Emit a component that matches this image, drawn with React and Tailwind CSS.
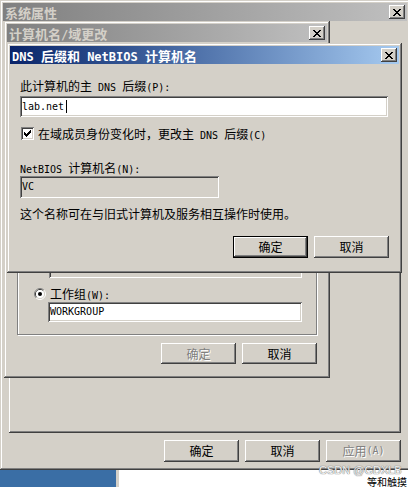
import React from 'react'

const CJK = /[\u2e80-\u9fff\uff00-\uffef]/
const RUNS = /[\u2e80-\u9fff\uff00-\uffef]+|[^\u2e80-\u9fff\uff00-\uffef]+/g

// SimSun-like text: CJK at 12px, latin in a narrow mono face
function Txt({ s, bold }) {
  const parts = s.match(RUNS) || []
  return parts.map((p, i) =>
    CJK.test(p) ? (
      <span key={i} className={bold ? 'text-[13px] font-bold' : 'text-[12px]'}>{p}</span>
    ) : (
      <span
        key={i}
        className={
          bold
            ? "[font-family:'DejaVu_Sans_Mono',monospace] text-[12px] font-bold"
            : "[font-family:'DejaVu_Sans_Mono',monospace] text-[10px]"
        }
      >
        {p}
      </span>
    )
  )
}

const X_GLYPH = ['XX....XX', '.XX..XX.', '..XXXX..', '...XX...', '..XXXX..', '.XX..XX.', 'XX....XX']
const CHECK = ['......X', '.....XX', 'X...XXX', 'XX.XXX.', 'XXXXX..', '.XXX...', '..X....']

function Pixels({ rows }) {
  return (
    <svg width={rows[0].length} height={rows.length} shapeRendering="crispEdges">
      {rows.map((r, y) =>
        r.split('').map((c, x) => (c === 'X' ? <rect key={`${x}-${y}`} x={x} y={y} width="1" height="1" fill="#000" /> : null))
      )}
    </svg>
  )
}

function CloseBtn() {
  return (
    <div className="w-[16px] h-[14px] shrink-0 bg-[#d4d0c8] flex items-center justify-center shadow-[inset_-1px_-1px_0_#404040,inset_1px_1px_0_#ffffff,inset_-2px_-2px_0_#808080,inset_2px_2px_0_#d4d0c8]">
      <Pixels rows={X_GLYPH} />
    </div>
  )
}

function TitleBar({ title, active }) {
  return (
    <div
      className={`h-[18px] shrink-0 flex items-center justify-between pl-[2px] pr-[2px] whitespace-pre leading-[18px] ${
        active
          ? 'bg-linear-to-r from-[#0a246a] to-[#a6caf0] text-white'
          : 'bg-linear-to-r from-[#808080] to-[#c0c0c0] text-[#d4d0c8]'
      }`}
    >
      <div>
        <Txt s={title} bold />
      </div>
      <CloseBtn />
    </div>
  )
}

function Btn({ children, disabled, def, w = 'w-[75px]', h = 'h-[22px]' }) {
  return (
    <div
      className={`${w} ${h} flex items-center justify-center whitespace-pre leading-[14px] bg-[#d4d0c8] ${
        def
          ? 'border border-black shadow-[inset_-1px_-1px_0_#404040,inset_1px_1px_0_#ffffff,inset_-2px_-2px_0_#808080]'
          : 'shadow-[inset_-1px_-1px_0_#404040,inset_1px_1px_0_#ffffff,inset_-2px_-2px_0_#808080,inset_2px_2px_0_#d4d0c8]'
      } ${disabled ? 'text-[#808080] [text-shadow:1px_1px_0_#ffffff]' : 'text-black'}`}
    >
      <Txt s={children} />
    </div>
  )
}

const SUNKEN = 'shadow-[inset_1px_1px_0_#808080,inset_-1px_-1px_0_#ffffff,inset_2px_2px_0_#404040,inset_-2px_-2px_0_#d4d0c8]'
const WINDOW = 'bg-[#d4d0c8] p-[3px] shadow-[inset_-1px_-1px_0_#404040,inset_1px_1px_0_#d4d0c8,inset_-2px_-2px_0_#808080,inset_2px_2px_0_#ffffff]'

function Radio() {
  return (
    <svg width="12" height="12" viewBox="0 0 12 12">
      <path d="M2.11 9.89 A5.5 5.5 0 0 1 9.89 2.11" fill="none" stroke="#808080" />
      <path d="M9.89 2.11 A5.5 5.5 0 0 1 2.11 9.89" fill="none" stroke="#ffffff" />
      <path d="M2.82 9.18 A4.5 4.5 0 0 1 9.18 2.82" fill="none" stroke="#404040" />
      <path d="M9.18 2.82 A4.5 4.5 0 0 1 2.82 9.18" fill="none" stroke="#d4d0c8" />
      <circle cx="6" cy="6" r="4" fill="#ffffff" />
      <circle cx="6" cy="6" r="2" fill="#000000" />
    </svg>
  )
}

function Checkbox() {
  return (
    <div className={`w-[13px] h-[13px] bg-white flex items-center justify-center ${SUNKEN}`}>
      <Pixels rows={CHECK} />
    </div>
  )
}

export default function App() {
  return (
    <div className="w-[408px] h-[487px] overflow-hidden bg-white flex flex-col text-black [font-family:'Noto_Sans_CJK_SC',sans-serif]">
      <div className="relative h-[470px] shrink-0">
        {/* 系统属性 */}
        <div className={`w-[410px] h-[470px] flex flex-col ${WINDOW}`}>
          <TitleBar title="系统属性" />
          <div className="ml-[6px] mt-[39px] w-[392px] h-[373px] shrink-0 shadow-[inset_-1px_-1px_0_#404040,inset_1px_1px_0_#ffffff,inset_-2px_-2px_0_#808080]" />
          <div className="flex gap-[6px] ml-[161px] mt-[7px]">
            <Btn>确定</Btn>
            <Btn>取消</Btn>
            <Btn disabled>应用(A)</Btn>
          </div>
        </div>

        {/* 计算机名/域更改 */}
        <div className={`absolute left-[4px] top-[21px] w-[326px] h-[357px] flex flex-col ${WINDOW}`}>
          <TitleBar title="计算机名/域更改" />
          <div className="ml-[10px] mt-[108px] w-[300px] h-[185px] shrink-0 flex flex-col border border-[#808080] shadow-[inset_1px_1px_0_#ffffff,1px_1px_0_#ffffff]">
            <div className={`ml-[31px] mt-[105px] w-[253px] h-[22px] shrink-0 bg-[#d4d0c8] ${SUNKEN}`} />
            <div className="ml-[16px] mt-[10px] h-[12px] flex items-center gap-[4px] leading-[12px] whitespace-pre">
              <Radio />
              <div>
                <Txt s="工作组(W):" />
              </div>
            </div>
            <div className={`ml-[30px] mt-[2px] w-[254px] h-[20px] shrink-0 bg-white flex items-center pl-[2px] leading-[14px] ${SUNKEN}`}>
              <Txt s="WORKGROUP" />
            </div>
          </div>
          <div className="flex gap-[6px] ml-[154px] mt-[8px]">
            <Btn disabled h="h-[21px]">确定</Btn>
            <Btn h="h-[21px]">取消</Btn>
          </div>
        </div>

        {/* DNS 后缀和 NetBIOS 计算机名 */}
        <div className={`absolute left-[7px] top-[43px] w-[395px] h-[230px] flex flex-col ${WINDOW}`}>
          <TitleBar active title="DNS 后缀和 NetBIOS 计算机名" />
          <div className="pl-[10px] flex flex-col whitespace-pre">
            <div className="mt-[13px] h-[14px] leading-[14px]">
              <Txt s="此计算机的主 DNS 后缀(P):" />
            </div>
            <div className={`mt-[5px] w-[368px] h-[21px] bg-white flex items-center pl-[2px] leading-[14px] ${SUNKEN}`}>
              <Txt s="lab.net" />
              <div className="ml-[2px] w-[1px] h-[13px] bg-black" />
            </div>
            <div className="mt-[10px] ml-[1px] h-[13px] flex items-center gap-[4px] leading-[13px]">
              <Checkbox />
              <div>
                <Txt s="在域成员身份变化时，更改主 DNS 后缀(C)" />
              </div>
            </div>
            <div className="mt-[19px] h-[14px] leading-[14px]">
              <Txt s="NetBIOS 计算机名(N):" />
            </div>
            <div className={`mt-[3px] w-[199px] h-[22px] bg-[#d4d0c8] flex items-center pl-[2px] leading-[14px] ${SUNKEN}`}>
              <Txt s="VC" />
            </div>
            <div className="mt-[7px] h-[14px] leading-[14px]">
              <Txt s="这个名称可在与旧式计算机及服务相互操作时使用。" />
            </div>
            <div className="flex gap-[6px] ml-[213px] mt-[17px]">
              <Btn def>确定</Btn>
              <Btn>取消</Btn>
            </div>
          </div>
        </div>

        {/* watermark */}
        <div className="absolute left-[319px] top-[464px] whitespace-nowrap text-[11px] leading-[12px] text-[#f4f4f4] [font-family:'Liberation_Sans',sans-serif] [text-shadow:0_0_1px_#606060,0_0_1px_#808080]">
          CSDN @GDXLB
        </div>
      </div>

      <div className="flex h-[17px] shrink-0">
        <div className="w-[116px] bg-[#3a6ea5]" />
        <div className="w-[3px] bg-[#d4d0c8]" />
        <div className="flex-1 bg-white flex justify-end items-start pt-[7px] pr-[1px] text-[10px] leading-[10px] whitespace-nowrap">
          <span>等和触摸</span>
        </div>
      </div>
    </div>
  )
}
